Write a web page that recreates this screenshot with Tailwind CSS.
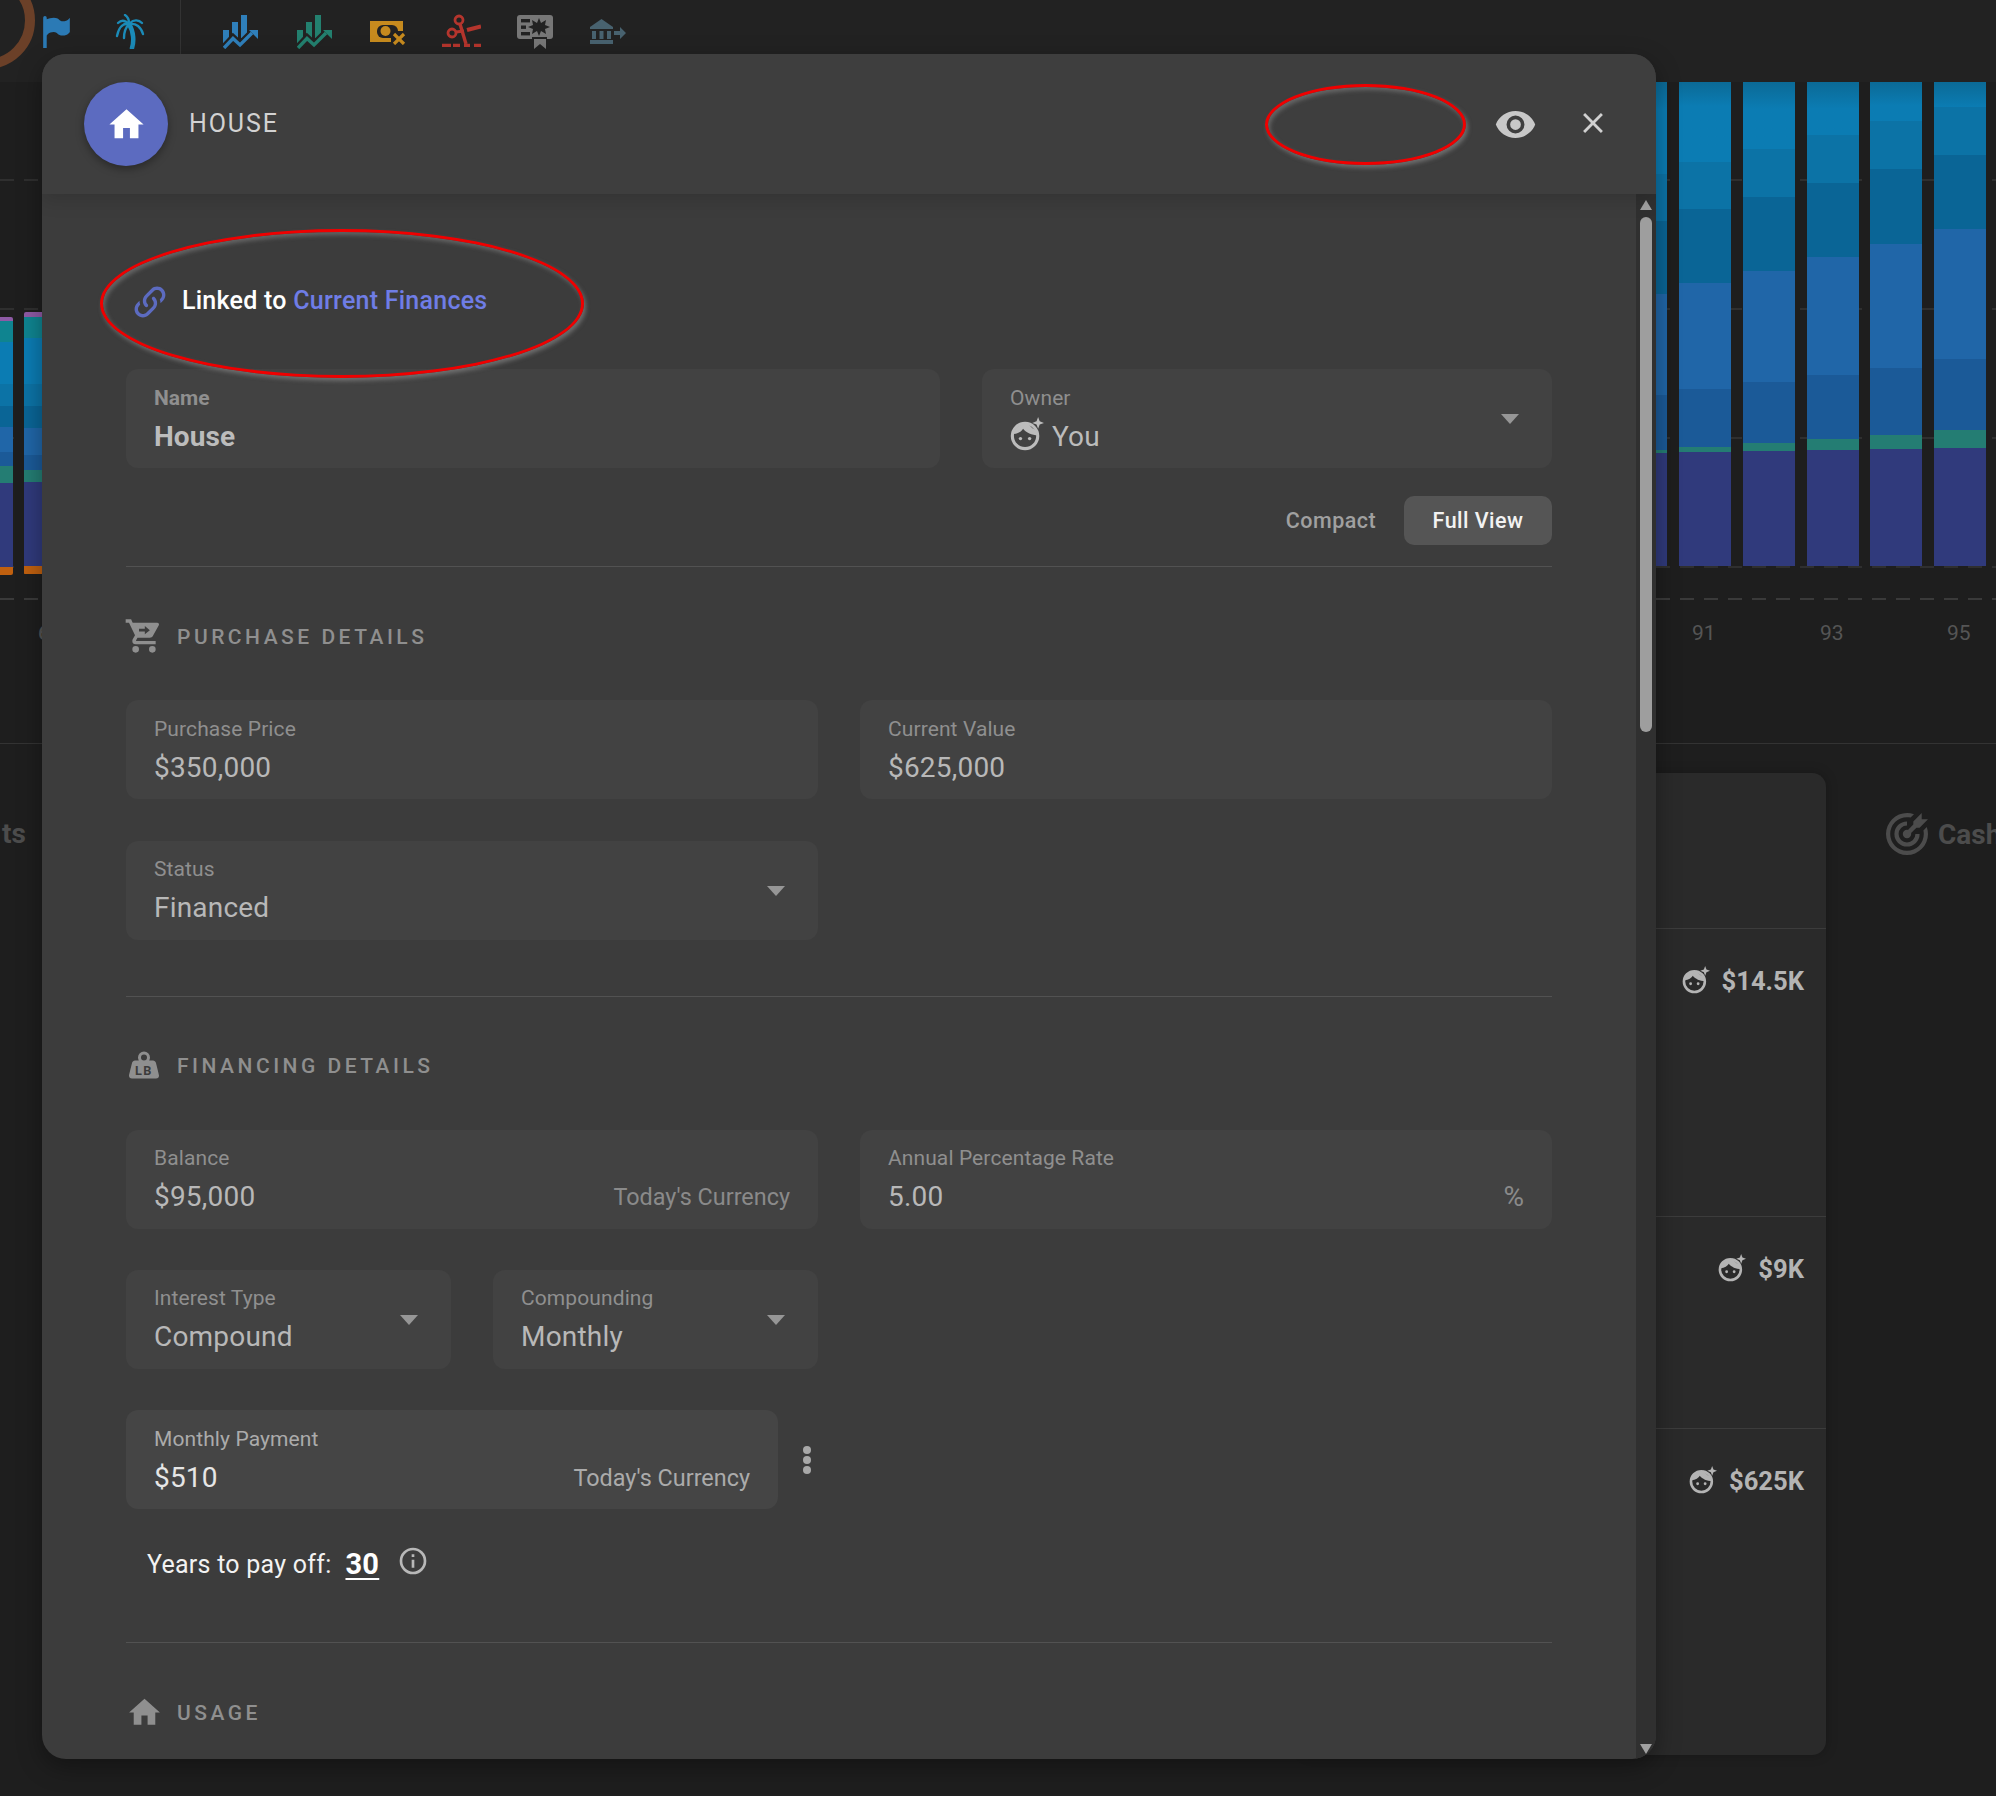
<!DOCTYPE html>
<html lang="en">
<head>
<meta charset="utf-8">
<title>House</title>
<script src="https://cdn.jsdelivr.net/npm/@tailwindcss/browser@4"></script>
</head>
<body class="bg-[#1e1e1e]">
<div class="relative w-[1996px] h-[1796px] overflow-hidden bg-[#1e1e1e] font-['Roboto',sans-serif]">

  <!-- toolbar -->
  <div class="relative h-[82px] bg-[#222222] flex items-start pl-[43px] overflow-hidden">
    <div class="absolute left-[-62px] top-[-28px] w-[97px] h-[97px] rounded-full border-[10px] border-[#6b4028]"></div>
    <svg class="mt-[16px] shrink-0" width="27" height="32" viewBox="5 3 15 18" fill="#2b7ab5"><path d="M6,3A1,1 0 0,1 7,4V4.88C8.06,4.44 9.5,4 11,4C14,4 14,6 16,6C19,6 20,4 20,4V12C20,12 19,14 16,14C13,14 13,12 11,12C8,12 7,14 7,14V21H5V4A1,1 0 0,1 6,3Z"/></svg>
    <svg class="ml-[45px] mt-[14px] shrink-0" width="30" height="35" viewBox="0 0 30 35" fill="none" stroke="#1b8bb8" stroke-width="2.4" stroke-linecap="round"><path d="M14 10C19 18 19 28 17 34" stroke-width="4.5"/><path d="M14 10C9 9 4 12 2 22"/><path d="M14 10C10 6 6 6 3 9"/><path d="M14 9C14 6 13 3 10 1"/><path d="M15 9C19 5 24 6 27 9"/><path d="M15 10C21 9 26 13 28 20"/><path d="M14 10C11 13 9 18 9 24"/></svg>
    <div class="ml-[35px] w-px h-[82px] bg-[#333333] shrink-0"></div>
    <svg class="ml-[42px] mt-[15px] shrink-0" width="35" height="34" viewBox="0 0 35 34" fill="#2f7fba"><rect x="0" y="15" width="6" height="15"/><rect x="9" y="7" width="6" height="19"/><rect x="18" y="0" width="6" height="23"/><path d="M1 33L10 23.5L17 30L29 18" fill="none" stroke="#222222" stroke-width="8"/><path d="M1 33L10 23.5L17 30L29 18" fill="none" stroke="#2f7fba" stroke-width="3.4"/><path d="M26 15H35V24Z"/></svg>
    <svg class="ml-[39px] mt-[15px] shrink-0" width="35" height="34" viewBox="0 0 35 34" fill="#23806f"><rect x="0" y="15" width="6" height="15"/><rect x="9" y="7" width="6" height="19"/><rect x="18" y="0" width="6" height="23"/><path d="M1 33L10 23.5L17 30L29 18" fill="none" stroke="#222222" stroke-width="8"/><path d="M1 33L10 23.5L17 30L29 18" fill="none" stroke="#23806f" stroke-width="3.4"/><path d="M26 15H35V24Z"/></svg>
    <svg class="ml-[38px] mt-[21px] shrink-0" width="36" height="24" viewBox="0 0 36 24"><rect x="0" y="0" width="33" height="21" fill="#c68a1e"/><rect x="7" y="4" width="21" height="13" rx="6" fill="#222222"/><circle cx="15.5" cy="10" r="5" fill="#c68a1e"/><rect x="21" y="10" width="15" height="14" fill="#222222"/><path d="M24 13L34 23M34 13L24 23" stroke="#c68a1e" stroke-width="3.2"/></svg>
    <svg class="ml-[36px] mt-[14px] shrink-0" width="39" height="33" viewBox="0 0 39 33" fill="none" stroke="#b5352d" stroke-width="2.8"><circle cx="17" cy="6" r="4"/><circle cx="10" cy="19" r="4"/><path d="M18 10L24 30" stroke-width="3.4"/><path d="M14 18L22 17" stroke-width="3"/><path d="M25 16L39 12.5" stroke-width="4"/><path d="M0 31.5H9M11 31.5H18M22 31.5H28M32 31.5H39" stroke-width="3.4"/></svg>
    <svg class="ml-[36px] mt-[15px] shrink-0" width="36" height="34" viewBox="0 0 36 34"><rect x="0" y="0" width="36" height="24" rx="3" fill="#777777"/><rect x="4" y="4" width="9" height="3.4" fill="#222222"/><rect x="4" y="10.5" width="5" height="3.4" fill="#222222"/><rect x="4" y="17" width="9" height="3.4" fill="#222222"/><path d="M22 3L24 8L29 5L28 10L33 12L28 14L29 19L24 16L22 21L20 16L15 19L16 14L11 12L16 10L15 5L20 8Z" fill="#222222"/><path d="M15 22H30V24H15Z" fill="#222222"/><path d="M17 24H29V34L23 29L17 34Z" fill="#777777"/></svg>
    <svg class="ml-[37px] mt-[19px] shrink-0" width="36" height="25" viewBox="0 0 36 25" fill="#48626f"><path d="M0 8L11.5 0L23 8V10H0Z"/><rect x="2" y="12" width="4" height="8"/><rect x="9.5" y="12" width="4" height="8"/><rect x="17" y="12" width="4" height="8"/><rect x="0" y="21" width="23" height="4"/><path d="M24 12H30V8L36 14L30 20V16H24Z"/></svg>
  </div>

  <!-- chart -->
  <div class="h-[662px] border-b border-[#333333] flex flex-col">
    <div class="relative h-[518px] shrink-0 flex justify-between items-start">
      <div class="absolute left-0 right-0 top-[97px] h-[2px] bg-[repeating-linear-gradient(90deg,#2f2f2f_0_14px,transparent_14px_24px)]"></div>
      <div class="absolute left-0 right-0 top-[226px] h-[2px] bg-[repeating-linear-gradient(90deg,#2f2f2f_0_14px,transparent_14px_24px)]"></div>
      <div class="absolute left-0 right-0 top-[355px] h-[2px] bg-[repeating-linear-gradient(90deg,#2f2f2f_0_14px,transparent_14px_24px)]"></div>
      <div class="absolute left-0 right-0 top-[484px] h-[2px] bg-[repeating-linear-gradient(90deg,#2f2f2f_0_14px,transparent_14px_24px)]"></div>
      <div class="absolute left-0 right-0 bottom-0 h-[2px] bg-[repeating-linear-gradient(90deg,#3a3a3a_0_14px,transparent_14px_24px)]"></div>
      <div class="relative flex gap-[11px] -ml-[39px]">
        <div class="w-[52px] mt-[235px] flex flex-col rounded-[2px] overflow-hidden">
          <div class="bg-[#8e5aa5]" style="height:4px"></div><div class="bg-[#0f8490]" style="height:21px"></div><div class="bg-[#0b7cb3]" style="height:42px"></div><div class="bg-[#0c73a6]" style="height:22px"></div><div class="bg-[#0a6596]" style="height:21px"></div><div class="bg-[#2066a8]" style="height:25px"></div><div class="bg-[#1b5a98]" style="height:14px"></div><div class="bg-[#247d73]" style="height:17px"></div><div class="bg-[#303a7c]" style="height:84px"></div><div class="bg-[#c0600f]" style="height:8px"></div>
        </div>
        <div class="w-[52px] mt-[230px] flex flex-col rounded-[2px] overflow-hidden">
          <div class="bg-[#8e5aa5]" style="height:5px"></div><div class="bg-[#0f8490]" style="height:21px"></div><div class="bg-[#0b7cb3]" style="height:46px"></div><div class="bg-[#0c73a6]" style="height:22px"></div><div class="bg-[#0a6596]" style="height:22px"></div><div class="bg-[#2066a8]" style="height:27px"></div><div class="bg-[#1b5a98]" style="height:15px"></div><div class="bg-[#247d73]" style="height:12px"></div><div class="bg-[#303a7c]" style="height:84px"></div><div class="bg-[#c0600f]" style="height:8px"></div>
        </div>
      </div>
      <div class="relative flex gap-[11.75px] mr-[10px]">
        <div class="w-[52px] h-[484px] flex flex-col">
          <div class="bg-linear-to-b from-[#0b6a96] to-[#0b7cb3] to-30%" style="height:92px"></div><div class="bg-[#0c73a6]" style="height:47px"></div><div class="bg-[#0a6596]" style="height:73px"></div><div class="bg-[#2066a8]" style="height:101px"></div><div class="bg-[#1b5a98]" style="height:55px"></div><div class="bg-[#247d73]" style="height:3px"></div><div class="bg-[#303a7c]" style="height:113px"></div>
        </div>
        <div class="w-[52px] h-[484px] flex flex-col">
          <div class="bg-linear-to-b from-[#0b6a96] to-[#0b7cb3] to-30%" style="height:80px"></div><div class="bg-[#0c73a6]" style="height:47px"></div><div class="bg-[#0a6596]" style="height:74px"></div><div class="bg-[#2066a8]" style="height:106px"></div><div class="bg-[#1b5a98]" style="height:58px"></div><div class="bg-[#247d73]" style="height:5px"></div><div class="bg-[#303a7c]" style="height:114px"></div>
        </div>
        <div class="w-[52px] h-[484px] flex flex-col">
          <div class="bg-linear-to-b from-[#0b6a96] to-[#0b7cb3] to-40%" style="height:67px"></div><div class="bg-[#0c73a6]" style="height:48px"></div><div class="bg-[#0a6596]" style="height:74px"></div><div class="bg-[#2066a8]" style="height:111px"></div><div class="bg-[#1b5a98]" style="height:61px"></div><div class="bg-[#247d73]" style="height:8px"></div><div class="bg-[#303a7c]" style="height:115px"></div>
        </div>
        <div class="w-[52px] h-[484px] flex flex-col">
          <div class="bg-linear-to-b from-[#0b6a96] to-[#0b7cb3] to-50%" style="height:53px"></div><div class="bg-[#0c73a6]" style="height:48px"></div><div class="bg-[#0a6596]" style="height:74px"></div><div class="bg-[#2066a8]" style="height:118px"></div><div class="bg-[#1b5a98]" style="height:64px"></div><div class="bg-[#247d73]" style="height:11px"></div><div class="bg-[#303a7c]" style="height:116px"></div>
        </div>
        <div class="w-[52px] h-[484px] flex flex-col">
          <div class="bg-linear-to-b from-[#0b6a96] to-[#0b7cb3] to-60%" style="height:39px"></div><div class="bg-[#0c73a6]" style="height:48px"></div><div class="bg-[#0a6596]" style="height:75px"></div><div class="bg-[#2066a8]" style="height:124px"></div><div class="bg-[#1b5a98]" style="height:67px"></div><div class="bg-[#247d73]" style="height:14px"></div><div class="bg-[#303a7c]" style="height:117px"></div>
        </div>
        <div class="w-[52px] h-[484px] flex flex-col">
          <div class="bg-linear-to-b from-[#0b6a96] to-[#0b7cb3]" style="height:25px"></div><div class="bg-[#0c73a6]" style="height:48px"></div><div class="bg-[#0a6596]" style="height:74px"></div><div class="bg-[#2066a8]" style="height:130px"></div><div class="bg-[#1b5a98]" style="height:71px"></div><div class="bg-[#247d73]" style="height:18px"></div><div class="bg-[#303a7c]" style="height:118px"></div>
        </div>
      </div>
    </div>
    <div class="relative flex-1 text-[21px] text-[#555555]">
      <span class="absolute left-[38px] top-[18px] font-medium">6</span>
      <span class="absolute left-[1692px] top-[18px]">91</span>
      <span class="absolute left-[1820px] top-[18px]">93</span>
      <span class="absolute left-[1947px] top-[18px]">95</span>
    </div>
  </div>

  <!-- section titles behind the dialog -->
  <div class="absolute left-[2px] top-[813px] h-[42px] leading-[42px] text-[28px] font-bold text-[#4c4c4c]">ts</div>
  <div class="absolute left-[1886px] top-[812px] flex items-center gap-[10px] text-[28px] font-bold text-[#4c4c4c]">
    <svg class="shrink-0" width="42" height="42" viewBox="2 2 20 20" fill="#4c4c4c"><path d="M12 2A10 10 0 0 0 2 12A10 10 0 0 0 12 22A10 10 0 0 0 22 12C22 10.84 21.79 9.73 21.41 8.69L19.81 10.29C19.93 10.84 20 11.41 20 12A8 8 0 0 1 12 20A8 8 0 0 1 4 12A8 8 0 0 1 12 4C12.59 4 13.16 4.07 13.71 4.19L15.32 2.58C14.27 2.21 13.16 2 12 2M19 2L15 6V7.5L12.45 10.05C12.3 10 12.15 10 12 10A2 2 0 0 0 10 12A2 2 0 0 0 12 14A2 2 0 0 0 14 12C14 11.85 14 11.7 13.95 11.55L16.5 9H18L22 5H19V2M12 6A6 6 0 0 0 6 12A6 6 0 0 0 12 18A6 6 0 0 0 18 12H16A4 4 0 0 1 12 16A4 4 0 0 1 8 12A4 4 0 0 1 12 8V6Z"/></svg>
    <span class="whitespace-nowrap mt-[2px]">Cash</span>
  </div>

  <!-- panel behind the dialog -->
  <div class="absolute left-[1300px] top-[773px] w-[526px] h-[982px] rounded-[14px] bg-[#2a2a2a] flex flex-col text-[25.6px] font-bold text-[#b4b4b4] shadow-[0_0_12px_rgba(0,0,0,0.25)]">
    <div class="h-[156px] border-b border-[#3c3c3c]"></div>
    <div class="h-[288px] border-b border-[#3c3c3c] pt-[35px] pr-[22px] flex justify-end items-start gap-[12px]">
      <svg class="shrink-0 mt-[2px]" width="28" height="28" viewBox="0 0 26 26" fill="#b4b4b4"><circle cx="11.5" cy="14.5" r="9.7" fill="none" stroke="#b4b4b4" stroke-width="2.4"/><path d="M2.5 13C4 7 9 4.5 14 4.5c1.5 3 4 5 7 6l.5 3.5c-5 0-9-2-11.5-5C9 11 6 13 2.5 13z"/><circle cx="8" cy="16.5" r="1.3"/><circle cx="15" cy="16.5" r="1.3"/><path d="M21.5 0l1.2 3.3 3.3 1.2-3.3 1.2-1.2 3.3-1.2-3.3-3.3-1.2 3.3-1.2z"/></svg>
      <span class="leading-[34px]">$14.5K</span>
    </div>
    <div class="h-[212px] border-b border-[#3c3c3c] pt-[35px] pr-[22px] flex justify-end items-start gap-[12px]">
      <svg class="shrink-0 mt-[2px]" width="28" height="28" viewBox="0 0 26 26" fill="#b4b4b4"><circle cx="11.5" cy="14.5" r="9.7" fill="none" stroke="#b4b4b4" stroke-width="2.4"/><path d="M2.5 13C4 7 9 4.5 14 4.5c1.5 3 4 5 7 6l.5 3.5c-5 0-9-2-11.5-5C9 11 6 13 2.5 13z"/><circle cx="8" cy="16.5" r="1.3"/><circle cx="15" cy="16.5" r="1.3"/><path d="M21.5 0l1.2 3.3 3.3 1.2-3.3 1.2-1.2 3.3-1.2-3.3-3.3-1.2 3.3-1.2z"/></svg>
      <span class="leading-[34px]">$9K</span>
    </div>
    <div class="pt-[35px] pr-[22px] flex justify-end items-start gap-[12px]">
      <svg class="shrink-0 mt-[2px]" width="28" height="28" viewBox="0 0 26 26" fill="#b4b4b4"><circle cx="11.5" cy="14.5" r="9.7" fill="none" stroke="#b4b4b4" stroke-width="2.4"/><path d="M2.5 13C4 7 9 4.5 14 4.5c1.5 3 4 5 7 6l.5 3.5c-5 0-9-2-11.5-5C9 11 6 13 2.5 13z"/><circle cx="8" cy="16.5" r="1.3"/><circle cx="15" cy="16.5" r="1.3"/><path d="M21.5 0l1.2 3.3 3.3 1.2-3.3 1.2-1.2 3.3-1.2-3.3-3.3-1.2 3.3-1.2z"/></svg>
      <span class="leading-[34px]">$625K</span>
    </div>
  </div>

  <!-- dialog -->
  <div class="absolute left-[42px] top-[54px] w-[1614px] h-[1705px] rounded-[24px] bg-[#3c3c3c] overflow-hidden flex flex-col shadow-[0_8px_24px_rgba(0,0,0,0.35)]">
    <div class="relative z-10 h-[140px] shrink-0 bg-[#3e3e3e] flex items-center pl-[42px] pr-[46px] shadow-[0_6px_18px_rgba(0,0,0,0.14)]">
      <div class="w-[84px] h-[84px] rounded-full bg-[#5c6bc0] flex items-center justify-center shadow-[0_3px_8px_rgba(0,0,0,0.35)]">
        <svg width="41" height="41" viewBox="0 0 24 24" fill="#ffffff"><path d="M10,20V14H14V20H19V12H22L12,3L2,12H5V20H10Z"/></svg>
      </div>
      <div class="ml-[21px] text-[25px] leading-[34px] tracking-[1.9px] text-[#d2d2d2]">HOUSE</div>
      <svg class="ml-auto" width="43" height="43" viewBox="0 0 24 24" fill="#c8c8c8"><path d="M12,9A3,3 0 0,0 9,12A3,3 0 0,0 12,15A3,3 0 0,0 15,12A3,3 0 0,0 12,9M12,17A5,5 0 0,1 7,12A5,5 0 0,1 12,7A5,5 0 0,1 17,12A5,5 0 0,1 12,17M12,4.5C7,4.5 2.73,7.61 1,12C2.73,16.39 7,19.5 12,19.5C17,19.5 21.27,16.39 23,12C21.27,7.61 17,4.5 12,4.5Z"/></svg>
      <svg class="ml-[39px] -mt-[2px]" width="34" height="34" viewBox="0 0 24 24" fill="#d0d0d0"><path d="M19,6.41L17.59,5L12,10.59L6.41,5L5,6.41L10.59,12L5,17.59L6.41,19L12,13.41L17.59,19L19,17.59L13.41,12L19,6.41Z"/></svg>
      <div class="absolute left-[1223px] top-[30px] w-[201px] h-[81px] rounded-[50%] border-[3px] border-[#f00000] shadow-[2px_3px_4px_rgba(150,150,150,0.55),inset_2px_3px_4px_rgba(150,150,150,0.45)]"></div>
    </div>

    <div class="relative flex-1 min-h-0 flex">
      <div class="relative flex-1 min-w-0 overflow-hidden px-[84px] pt-[86px]">
        <div class="h-[40px] flex items-center ml-[4px]">
          <svg class="shrink-0 mt-[4px]" width="40" height="40" viewBox="0 0 24 24" fill="#5c6bc0"><path d="M10.59,13.41C11,13.8 11,14.44 10.59,14.83C10.2,15.22 9.56,15.22 9.17,14.83C7.22,12.88 7.22,9.71 9.17,7.76V7.76L12.71,4.22C14.66,2.27 17.83,2.27 19.78,4.22C21.73,6.17 21.73,9.34 19.78,11.29L18.29,12.78C18.3,11.96 18.17,11.14 17.89,10.36L18.36,9.88C19.54,8.71 19.54,6.81 18.36,5.64C17.19,4.46 15.29,4.46 14.12,5.64L10.59,9.17C9.41,10.34 9.41,12.24 10.59,13.41M13.41,9.17C13.8,8.78 14.44,8.78 14.83,9.17C16.78,11.12 16.78,14.29 14.83,16.24V16.24L11.29,19.78C9.34,21.73 6.17,21.73 4.22,19.78C2.27,17.83 2.27,14.66 4.22,12.71L5.71,11.22C5.7,12.04 5.83,12.86 6.11,13.65L5.64,14.12C4.46,15.29 4.46,17.19 5.64,18.36C6.81,19.54 8.71,19.54 9.88,18.36L13.41,14.83C14.59,13.66 14.59,11.76 13.41,10.59C13,10.2 13,9.56 13.41,9.17Z"/></svg>
          <span class="ml-[12px] mt-[1px] text-[25px] font-medium tracking-[0.25px] text-white whitespace-nowrap">Linked to <span class="text-[#6f7de6]">Current Finances</span></span>
        </div>

        <div class="mt-[49px] grid grid-cols-[814px_570px] gap-[42px]">
          <div class="h-[99px] rounded-[12px] bg-[#424242] px-[28px] pt-[16px]">
            <div class="text-[21px] leading-[26px] font-bold text-[#8f8f8f]">Name</div>
            <div class="mt-[9px] text-[28px] leading-[34px] font-bold tracking-[0.1px] text-[#bcbcbc]">House</div>
          </div>
          <div class="h-[99px] rounded-[12px] bg-[#424242] pl-[28px] pr-[33px] flex items-center">
            <div class="flex-1 pt-[2px]">
              <div class="text-[21px] leading-[26px] tracking-[0.1px] text-[#8f8f8f]">Owner</div>
              <div class="mt-[9px] flex items-center text-[28px] leading-[34px] tracking-[0.15px] text-[#bcbcbc]">
                <svg class="shrink-0 -mt-[6px]" width="34" height="34" viewBox="0 0 26 26" fill="#bcbcbc"><circle cx="11.5" cy="14.5" r="9.7" fill="none" stroke="#bcbcbc" stroke-width="2.4"/><path d="M2.5 13C4 7 9 4.5 14 4.5c1.5 3 4 5 7 6l.5 3.5c-5 0-9-2-11.5-5C9 11 6 13 2.5 13z"/><circle cx="8" cy="16.5" r="1.3"/><circle cx="15" cy="16.5" r="1.3"/><path d="M21.5 0l1.2 3.3 3.3 1.2-3.3 1.2-1.2 3.3-1.2-3.3-3.3-1.2 3.3-1.2z"/></svg>
                <span class="ml-[8px]">You</span>
              </div>
            </div>
            <svg width="18" height="10" viewBox="0 0 18 10" fill="#969696"><path d="M0 0H18L9 10Z"/></svg>
          </div>
        </div>

        <div class="mt-[28px] flex items-center justify-end gap-[28px] text-[21.5px] font-medium tracking-[0.45px]">
          <span class="text-[#a0a0a0] pt-[2px]">Compact</span>
          <span class="w-[148px] h-[49px] pt-[2px] rounded-[10px] bg-[#555555] flex items-center justify-center text-[#f2f2f2]">Full View</span>
        </div>
        <div class="mt-[21px] h-px bg-[#525252]"></div>

        <div class="mt-[52px] h-[34px] flex items-center">
          <svg class="-ml-[2px] shrink-0" width="40" height="40" viewBox="0 0 24 24" fill="#8f8f8f"><path d="M9,20A2,2 0 0,1 7,22A2,2 0 0,1 5,20A2,2 0 0,1 7,18A2,2 0 0,1 9,20M17,18A2,2 0 0,0 15,20A2,2 0 0,0 17,22A2,2 0 0,0 19,20A2,2 0 0,0 17,18M7.2,14.63C7.19,14.67 7.17,14.71 7.17,14.75A0.25,0.25 0 0,0 7.42,15H19V17H7A2,2 0 0,1 5,15C5,14.65 5.07,14.31 5.24,14L6.6,11.59L3,4H1V2H4.27L5.21,4H20A1,1 0 0,1 21,5C21,5.17 20.95,5.34 20.88,5.5L17.3,11.97C16.96,12.58 16.3,13 15.55,13H8.1L7.2,14.63Z"/><path d="M9 7.7H12.5V6L15.5 8.5L12.5 11V9.3H9Z" fill="#3c3c3c"/></svg>
          <span class="ml-[13px] mt-[3px] text-[21px] font-medium tracking-[3.5px] text-[#8f8f8f] whitespace-nowrap">PURCHASE DETAILS</span>
        </div>

        <div class="mt-[47px] grid grid-cols-2 gap-[42px]">
          <div class="h-[99px] rounded-[12px] bg-[#424242] px-[28px] pt-[16px]">
            <div class="text-[21px] leading-[26px] tracking-[0.1px] text-[#8f8f8f]">Purchase Price</div>
            <div class="mt-[9px] text-[28px] leading-[34px] tracking-[0.2px] text-[#b8b8b8]">$350,000</div>
          </div>
          <div class="h-[99px] rounded-[12px] bg-[#424242] px-[28px] pt-[16px]">
            <div class="text-[21px] leading-[26px] tracking-[0.1px] text-[#8f8f8f]">Current Value</div>
            <div class="mt-[9px] text-[28px] leading-[34px] tracking-[0.2px] text-[#b8b8b8]">$625,000</div>
          </div>
          <div class="h-[99px] rounded-[12px] bg-[#424242] pl-[28px] pr-[33px] flex items-center">
            <div class="flex-1">
              <div class="text-[21px] leading-[26px] tracking-[0.1px] text-[#8f8f8f]">Status</div>
              <div class="mt-[9px] text-[28px] leading-[34px] tracking-[0.2px] text-[#b8b8b8]">Financed</div>
            </div>
            <svg width="18" height="10" viewBox="0 0 18 10" fill="#969696"><path d="M0 0H18L9 10Z"/></svg>
          </div>
        </div>
        <div class="mt-[56px] h-px bg-[#525252]"></div>

        <div class="mt-[51px] h-[34px] flex items-center">
          <svg class="shrink-0" width="36" height="36" viewBox="0 0 24 24" fill="#8f8f8f"><path d="M12,3A4,4 0 0,1 16,7C16,7.73 15.81,8.41 15.46,9H18C18.95,9 19.75,9.67 19.95,10.56C21.96,18.57 22,18.78 22,19A2,2 0 0,1 20,21H4A2,2 0 0,1 2,19C2,18.78 2.04,18.57 4.05,10.56C4.25,9.67 5.05,9 6,9H8.54C8.19,8.41 8,7.73 8,7A4,4 0 0,1 12,3M12,5A2,2 0 0,0 10,7A2,2 0 0,0 12,9A2,2 0 0,0 14,7A2,2 0 0,0 12,5Z"/><text x="12" y="18.8" text-anchor="middle" font-family="Roboto" font-size="8.5" font-weight="700" letter-spacing="1" fill="#3c3c3c">LB</text></svg>
          <span class="ml-[15px] mt-[3px] text-[21px] font-medium tracking-[3.5px] text-[#8f8f8f] whitespace-nowrap">FINANCING DETAILS</span>
        </div>

        <div class="mt-[48px] grid grid-cols-2 gap-x-[42px] gap-y-[41px]">
          <div class="h-[99px] rounded-[12px] bg-[#424242] px-[28px] pt-[15px]">
            <div class="text-[21px] leading-[26px] tracking-[0.1px] text-[#8f8f8f]">Balance</div>
            <div class="mt-[9px] flex items-center justify-between leading-[34px]"><span class="text-[28px] tracking-[0.2px] text-[#b8b8b8]">$95,000</span><span class="text-[23.4px] text-[#8a8a8a]">Today's Currency</span></div>
          </div>
          <div class="h-[99px] rounded-[12px] bg-[#424242] px-[28px] pt-[15px]">
            <div class="text-[21px] leading-[26px] tracking-[0.1px] text-[#8f8f8f]">Annual Percentage Rate</div>
            <div class="mt-[9px] flex items-center justify-between leading-[34px]"><span class="text-[28px] tracking-[0.2px] text-[#b8b8b8]">5.00</span><span class="text-[28px] text-[#8a8a8a]">%</span></div>
          </div>
          <div class="grid grid-cols-2 gap-[42px]">
            <div class="h-[99px] rounded-[12px] bg-[#424242] pl-[28px] pr-[33px] flex items-center">
              <div class="flex-1">
                <div class="text-[21px] leading-[26px] tracking-[0.1px] text-[#8f8f8f]">Interest Type</div>
                <div class="mt-[9px] text-[28px] leading-[34px] tracking-[0.2px] text-[#b8b8b8]">Compound</div>
              </div>
              <svg width="18" height="10" viewBox="0 0 18 10" fill="#969696"><path d="M0 0H18L9 10Z"/></svg>
            </div>
            <div class="h-[99px] rounded-[12px] bg-[#424242] pl-[28px] pr-[33px] flex items-center">
              <div class="flex-1">
                <div class="text-[21px] leading-[26px] tracking-[0.1px] text-[#8f8f8f]">Compounding</div>
                <div class="mt-[9px] text-[28px] leading-[34px] tracking-[0.2px] text-[#b8b8b8]">Monthly</div>
              </div>
              <svg width="18" height="10" viewBox="0 0 18 10" fill="#969696"><path d="M0 0H18L9 10Z"/></svg>
            </div>
          </div>
        </div>

        <div class="mt-[41px] flex items-center">
          <div class="w-[652px] h-[99px] rounded-[12px] bg-[#454545] px-[28px] pt-[16px]">
            <div class="text-[21px] leading-[26px] tracking-[0.1px] text-[#ababab]">Monthly Payment</div>
            <div class="mt-[9px] flex items-center justify-between leading-[34px]"><span class="text-[28px] tracking-[0.2px] text-[#e6e6e6]">$510</span><span class="text-[23.4px] text-[#ababab]">Today's Currency</span></div>
          </div>
          <div class="ml-[25px] flex flex-col gap-[2px]">
            <div class="w-[8px] h-[8px] rounded-full bg-[#a8a8a8]"></div>
            <div class="w-[8px] h-[8px] rounded-full bg-[#a8a8a8]"></div>
            <div class="w-[8px] h-[8px] rounded-full bg-[#a8a8a8]"></div>
          </div>
        </div>

        <div class="mt-[38px] h-[36px] ml-[21px] flex items-center text-[25px] tracking-[0.25px] text-[#f2f2f2]">
          <span>Years to pay off:</span>
          <span class="ml-[14px] text-[29px] font-bold underline underline-offset-[4px] text-white">30</span>
          <svg class="ml-[18px] -mt-[8px]" width="32" height="32" viewBox="0 0 24 24" fill="#b8b8b8"><path d="M11,9H13V7H11M12,20C7.59,20 4,16.41 4,12C4,7.59 7.59,4 12,4C16.41,4 20,7.59 20,12C20,16.41 16.41,20 12,20M12,2A10,10 0 0,0 2,12A10,10 0 0,0 12,22A10,10 0 0,0 22,12A10,10 0 0,0 12,2M11,17H13V11H11V17Z"/></svg>
        </div>
        <div class="mt-[59px] h-px bg-[#525252]"></div>

        <div class="mt-[52px] h-[34px] flex items-center">
          <svg class="shrink-0" width="37" height="37" viewBox="0 0 24 24" fill="#8f8f8f"><path d="M10,20V14H14V20H19V12H22L12,3L2,12H5V20H10Z"/></svg>
          <span class="ml-[14px] mt-[3px] text-[21px] font-medium tracking-[3.5px] text-[#8f8f8f] whitespace-nowrap">USAGE</span>
        </div>

        <div class="absolute left-[58px] top-[35px] w-[484px] h-[149px] rounded-[50%] border-[3px] border-[#f00000] shadow-[2px_3px_4px_rgba(150,150,150,0.55),inset_2px_3px_4px_rgba(150,150,150,0.45)]"></div>
      </div>

      <div class="w-[20px] shrink-0 bg-[#303030] flex flex-col items-center pt-[6px] pb-[5px]">
        <svg width="12" height="10" viewBox="0 0 12 10" fill="#a0a0a0"><path d="M6 0L12 10H0Z"/></svg>
        <div class="mt-[7px] w-[12px] h-[515px] rounded-[6px] bg-[#9e9e9e]"></div>
        <svg class="mt-auto" width="12" height="10" viewBox="0 0 12 10" fill="#a0a0a0"><path d="M0 0H12L6 10Z"/></svg>
      </div>
    </div>
  </div>
</div>
</body>
</html>
